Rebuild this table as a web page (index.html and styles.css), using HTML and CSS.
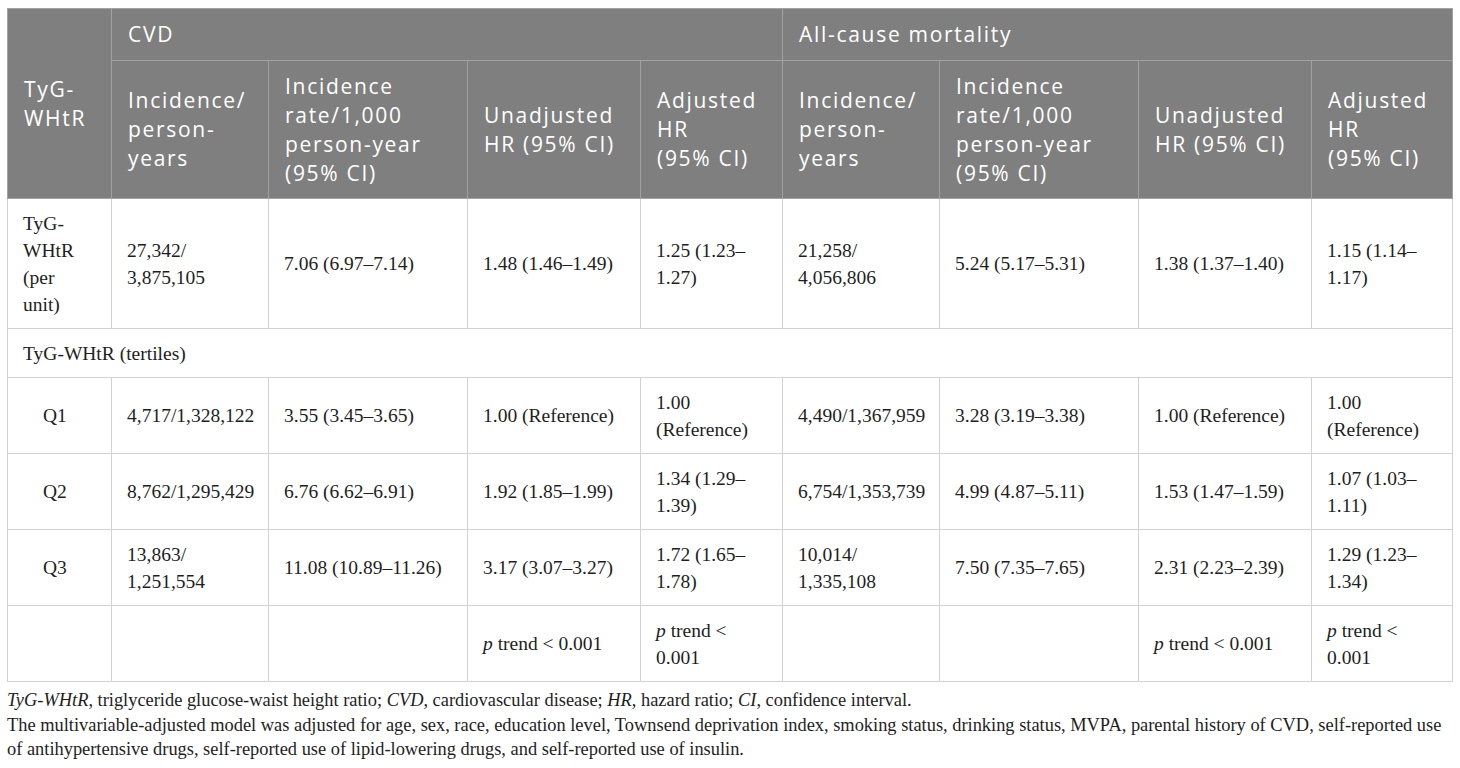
FILE: index.html
```html
<!DOCTYPE html>
<html lang="en">
<head>
<meta charset="utf-8">
<title>TyG-WHtR table</title>
<link rel="stylesheet" href="styles.css">
</head>
<body>
<div class="wrap">
<table class="data">
  <colgroup>
    <col class="c-a"><col class="c-b"><col class="c-c"><col class="c-d"><col class="c-e">
    <col class="c-b"><col class="c-c"><col class="c-d"><col class="c-f">
  </colgroup>
  <thead>
    <tr class="top">
      <th rowspan="2">TyG-<br>WHtR</th>
      <th colspan="4">CVD</th>
      <th colspan="4">All-cause mortality</th>
    </tr>
    <tr>
      <th>Incidence/<br>person-<br>years</th>
      <th>Incidence<br>rate/1,000<br>person-year<br>(95% CI)</th>
      <th>Unadjusted<br>HR (95% CI)</th>
      <th>Adjusted<br>HR<br>(95% CI)</th>
      <th>Incidence/<br>person-<br>years</th>
      <th>Incidence<br>rate/1,000<br>person-year<br>(95% CI)</th>
      <th>Unadjusted<br>HR (95% CI)</th>
      <th>Adjusted<br>HR<br>(95% CI)</th>
    </tr>
  </thead>
  <tbody>
    <tr>
      <td>TyG-<br>WHtR<br>(per<br>unit)</td>
      <td>27,342/<br>3,875,105</td>
      <td>7.06 (6.97–7.14)</td>
      <td>1.48 (1.46–1.49)</td>
      <td>1.25 (1.23–<br>1.27)</td>
      <td>21,258/<br>4,056,806</td>
      <td>5.24 (5.17–5.31)</td>
      <td>1.38 (1.37–1.40)</td>
      <td>1.15 (1.14–<br>1.17)</td>
    </tr>
    <tr>
      <td colspan="9">TyG-WHtR (tertiles)</td>
    </tr>
    <tr>
      <td class="q">Q1</td>
      <td>4,717/1,328,122</td>
      <td>3.55 (3.45–3.65)</td>
      <td>1.00 (Reference)</td>
      <td>1.00<br>(Reference)</td>
      <td>4,490/1,367,959</td>
      <td>3.28 (3.19–3.38)</td>
      <td>1.00 (Reference)</td>
      <td>1.00<br>(Reference)</td>
    </tr>
    <tr>
      <td class="q">Q2</td>
      <td>8,762/1,295,429</td>
      <td>6.76 (6.62–6.91)</td>
      <td>1.92 (1.85–1.99)</td>
      <td>1.34 (1.29–<br>1.39)</td>
      <td>6,754/1,353,739</td>
      <td>4.99 (4.87–5.11)</td>
      <td>1.53 (1.47–1.59)</td>
      <td>1.07 (1.03–<br>1.11)</td>
    </tr>
    <tr>
      <td class="q">Q3</td>
      <td>13,863/<br>1,251,554</td>
      <td>11.08 (10.89–11.26)</td>
      <td>3.17 (3.07–3.27)</td>
      <td>1.72 (1.65–<br>1.78)</td>
      <td>10,014/<br>1,335,108</td>
      <td>7.50 (7.35–7.65)</td>
      <td>2.31 (2.23–2.39)</td>
      <td>1.29 (1.23–<br>1.34)</td>
    </tr>
    <tr>
      <td></td>
      <td></td>
      <td></td>
      <td><i>p</i> trend &lt; 0.001</td>
      <td><i>p</i> trend &lt;<br>0.001</td>
      <td></td>
      <td></td>
      <td><i>p</i> trend &lt; 0.001</td>
      <td><i>p</i> trend &lt;<br>0.001</td>
    </tr>
  </tbody>
</table>
<div class="notes">
  <p><i>TyG-WHtR</i>, triglyceride glucose-waist height ratio; <i>CVD</i>, cardiovascular disease; <i>HR</i>, hazard ratio; <i>CI</i>, confidence interval.</p>
  <p>The multivariable-adjusted model was adjusted for age, sex, race, education level, Townsend deprivation index, smoking status, drinking status, MVPA, parental history of CVD, self-reported use<br>of antihypertensive drugs, self-reported use of lipid-lowering drugs, and self-reported use of insulin.</p>
</div>
</div>
</body>
</html>
```

FILE: styles.css
```css
html, body {
  margin: 0;
  padding: 0;
  background: #ffffff;
}

.wrap {
  padding: 8px 8px 0 7px;
}

.data {
  border-collapse: collapse;
  table-layout: fixed;
  width: 1445px;
}

.c-a { width: 104px; }
.c-b { width: 157px; }
.c-c { width: 199px; }
.c-d { width: 173px; }
.c-e { width: 142px; }
.c-f { width: 141px; }

.data th {
  background: #7f7f7f;
  color: #ffffff;
  font-family: "Open Sans", "DejaVu Sans", sans-serif;
  font-weight: 400;
  font-size: 21px;
  letter-spacing: 1.7px;
  line-height: 29px;
  text-align: left;
  vertical-align: middle;
  padding: 10.5px 8px 10.5px 16px;
  border: 1px solid #a2a2a2;
}

.data tr.top th {
  padding-top: 11px;
  padding-bottom: 11px;
}

.data td {
  font-family: "Liberation Serif", "Times New Roman", serif;
  font-size: 19.5px;
  line-height: 27px;
  color: #1e1e1e;
  text-align: left;
  vertical-align: middle;
  padding: 10.5px 6px 10.5px 15px;
  border: 1px solid #d2d2d2;
}

.data td.q {
  padding-left: 35px;
}

.notes {
  font-family: "Liberation Serif", "Times New Roman", serif;
  font-size: 18.4px;
  line-height: 24.5px;
  color: #1e1e1e;
  padding-top: 6px;
}

.notes p {
  margin: 0;
}
```
